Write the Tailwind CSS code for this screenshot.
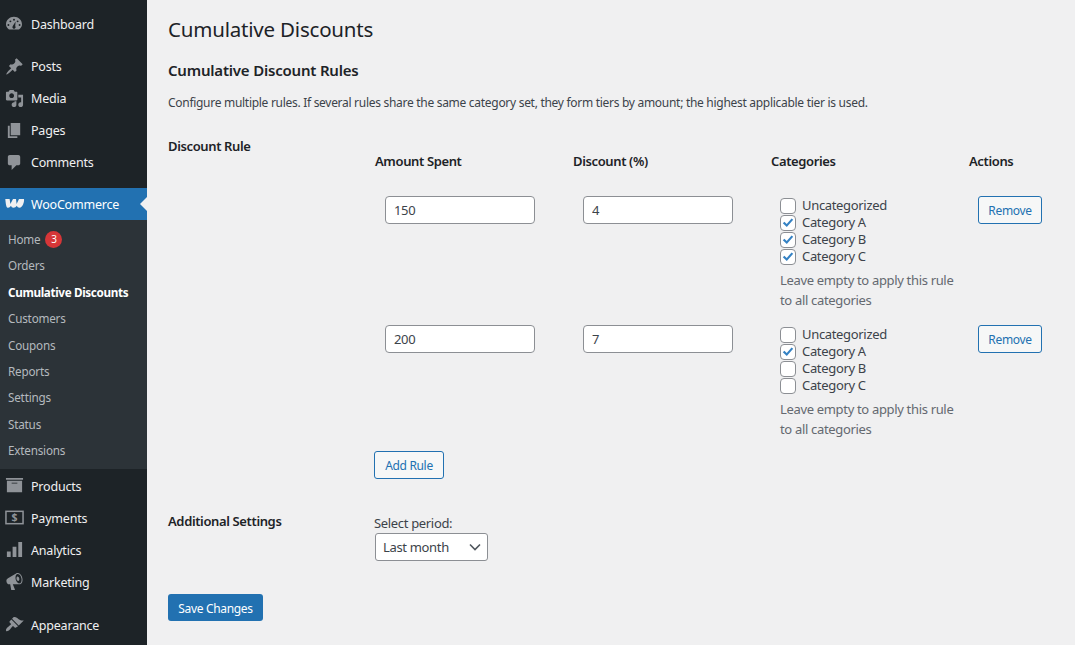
<!DOCTYPE html>
<html lang="en">
<head>
    <meta charset="UTF-8">
    <meta name="viewport" content="width=device-width, initial-scale=1.0">
    <title>Cumulative Discounts</title>
    <script src="https://cdn.jsdelivr.net/npm/@tailwindcss/browser@4"></script>
</head>
<body class="bg-[#f0f0f1] font-['Noto_Sans',sans-serif] text-[13px] text-[#3c434a] tracking-[-0.33px] overflow-hidden">
<div class="flex h-[645px] overflow-hidden">
    <!-- Sidebar -->
    <aside class="w-[147px] shrink-0 bg-[#1d2327] text-[#f0f0f1] text-[12.5px] tracking-[-0.2px] pt-2">
        <a class="flex items-center h-8 gap-[9px] pl-[6px]"><svg class="w-4 h-4 fill-[#8f9398]" viewBox="0 0 20 20"><path fill-rule="evenodd" d="M3.76 17h12.48C18.2 15.3 20 13 20 10.5 20 5 15.5 1 10 1S0 5 0 10.5C0 13 1.800 15.300 3.760 17zM10 3.500a1.200 1.200 0 110 2.400 1.200 1.200 0 010-2.400zM5.500 5.500a1.200 1.200 0 110 2.400 1.200 1.200 0 010-2.400zm9 0a1.200 1.200 0 110 2.400 1.200 1.200 0 010-2.400zM3 10a1.200 1.200 0 110 2.400A1.200 1.200 0 013 10zm14 0a1.200 1.200 0 110 2.400A1.200 1.200 0 0117 10zM12 7l-.5 5.500a2 2 0 11-3 0z"/></svg><span class="pt-[2px]">Dashboard</span></a>
        <div class="mt-[10px]">
            <a class="flex items-center h-8 gap-[7px] pl-[5px]"><svg class="w-[19px] h-[19px] fill-[#8f9398]" viewBox="0 0 20 20"><path d="M10.44 3.020l1.820-1.820 6.360 6.350-1.830 1.820c-1.050-.68-2.480-.57-3.410.36l-.75.75c-.92.93-1.040 2.350-.35 3.410l-1.830 1.820-2.410-2.410-2.800 2.790c-.42.42-3.380 2.710-3.800 2.290s1.860-3.390 2.280-3.810l2.790-2.790L4.100 9.360l1.830-1.820c1.050.69 2.480.57 3.400-.36l.75-.75c.93-.92 1.050-2.350.36-3.410z"/></svg><span class="pt-[2px]">Posts</span></a>
            <a class="flex items-center h-8 gap-[7px] pl-[5px]"><svg class="w-[19px] h-[19px] fill-[#8f9398]" viewBox="0 0 20 20"><path d="M13 11V4c0-.55-.45-1-1-1h-1.670L9 1H5L3.670 3H2c-.55 0-1 .45-1 1v7c0 .55.45 1 1 1h10c.55 0 1-.45 1-1zM7 4.500c1.380 0 2.500 1.120 2.500 2.500S8.380 9.500 7 9.500 4.500 8.380 4.500 7 5.620 4.500 7 4.500zM14 6h5v10.500c0 1.380-1.120 2.500-2.500 2.500S14 17.880 14 16.500s1.120-2.500 2.500-2.500c.17 0 .34.020.5.050V9h-3V6zm-4 8.050V13h2v3.500c0 1.380-1.120 2.500-2.500 2.500S7 17.880 7 16.500 8.120 14 9.500 14c.17 0 .34.020.5.050z"/></svg><span class="pt-[2px]">Media</span></a>
            <a class="flex items-center h-8 gap-[7px] pl-[5px]"><svg class="w-[19px] h-[19px] fill-[#8f9398]" viewBox="0 0 20 20"><path d="M6 15V2h10v13H6zm-1 1h8v2H3V5h2v11z"/></svg><span class="pt-[2px]">Pages</span></a>
            <a class="flex items-center h-8 gap-[7px] pl-[5px]"><svg class="w-[19px] h-[19px] fill-[#8f9398]" viewBox="0 0 20 20"><path d="M5 2h9c1.100 0 2 .9 2 2v7c0 1.100-.9 2-2 2h-2l-5 5v-5H5c-1.100 0-2-.9-2-2V4c0-1.100.9-2 2-2z"/></svg><span class="pt-[2px]">Comments</span></a>
        </div>
        <div class="mt-[10px]">
            <a class="relative flex items-center h-8 gap-[6px] pl-[5px] bg-[#2271b1] text-white"><svg class="w-5 h-5 fill-[#f0f0f1]" viewBox="0 0 20 20"><path d="M.3 5H4.600L5.400 10 8 5H11L11.600 10 14 5H19C19.500 8 17.500 13.800 14.600 13.800 13.200 13.800 12.300 13 11.800 11.800 11 13 9.800 13.800 8.600 13.800 7 13.800 6.400 13 6 11.800 5.200 13 4.200 13.800 3.200 13.800 1.600 13.800 1 12.500.3 5Z"/></svg><span class="pt-[2px]">WooCommerce</span><span class="absolute right-0 top-[9px] border-y-[7px] border-r-[7px] border-y-transparent border-r-[#f0f0f1]"></span></a>
            <div class="bg-[#2c3338] pt-[6.6px] pb-[4.8px] text-[11.7px] text-[#b4b9be]">
                <a class="flex items-center h-[26.4px] pl-2">Home<span class="ml-[5px] w-[17px] h-[17px] rounded-full bg-[#d63638] text-white text-[10px] flex items-center justify-center">3</span></a>
                <a class="flex items-center h-[26.4px] pl-2">Orders</a>
                <a class="flex items-center h-[26.4px] pl-2 font-bold text-white tracking-[-0.35px]">Cumulative Discounts</a>
                <a class="flex items-center h-[26.4px] pl-2">Customers</a>
                <a class="flex items-center h-[26.4px] pl-2">Coupons</a>
                <a class="flex items-center h-[26.4px] pl-2">Reports</a>
                <a class="flex items-center h-[26.4px] pl-2">Settings</a>
                <a class="flex items-center h-[26.4px] pl-2">Status</a>
                <a class="flex items-center h-[26.4px] pl-2">Extensions</a>
            </div>
        </div>
        <div class="mt-[1px]">
            <a class="flex items-center h-8 gap-[7px] pl-[5px]"><svg class="w-[19px] h-[19px] fill-[#8f9398]" viewBox="0 0 20 20"><path d="M19 2v2H1V2h18zM2 5h16v12H2V5zm11 3V7H7v1h6z"/></svg><span class="pt-[2px]">Products</span></a>
            <a class="flex items-center h-8 gap-[7px] pl-[5px]"><svg class="w-[19px] h-[19px]" viewBox="0 0 20 20"><rect x="1" y="3.500" width="18" height="13" fill="none" stroke="#8f9398" stroke-width="1.600"/><text x="10" y="14" text-anchor="middle" font-size="11" font-weight="700" fill="#8f9398">$</text></svg><span class="pt-[2px]">Payments</span></a>
            <a class="flex items-center h-8 gap-[7px] pl-[5px]"><svg class="w-[19px] h-[19px] fill-[#8f9398]" viewBox="0 0 20 20"><path d="M18 18V2h-4v16h4zm-6 0V7H8v11h4zm-6 0v-6H2v6h4z"/></svg><span class="pt-[2px]">Analytics</span></a>
            <a class="flex items-center h-8 gap-[7px] pl-[5px]"><svg class="w-[19px] h-[19px] fill-[#8f9398]" viewBox="0 0 20 20"><path d="M18.150 5.940c.46 1.620.38 3.220-.02 4.480-.42 1.280-1.260 2.180-2.300 2.480-.16.060-.26.060-.4.060-.06.020-.12.020-.18.020-.06.020-.14.020-.22.020h-6.800l2.220 5.500c.02.14-.06.26-.14.34-.08.1-.24.16-.34.16H6.950c-.1 0-.26-.06-.34-.16-.08-.08-.16-.2-.14-.34l-1-5.500H4.250l-.02-.02c-.5.060-1.080-.18-1.540-.62s-.88-1.080-1.060-1.880c-.24-.8-.2-1.560-.02-2.200.18-.62.58-1.080 1.060-1.300l.02-.02 9-5.400c.1-.06.18-.1.24-.16.06-.04.14-.08.24-.12.16-.08.28-.12.5-.18 1.040-.3 2.240.1 3.220.98s1.840 2.240 2.260 3.860zm-2.580 5.980h-.02c.4-.1.74-.34 1.040-.7.58-.7.86-1.760.86-3.040 0-.64-.1-1.300-.28-1.980-.34-1.360-1.020-2.500-1.780-3.240s-1.680-1.100-2.460-.88c-.82.22-1.400.96-1.700 2-.32 1.040-.28 2.360.06 3.720.38 1.360 1 2.500 1.800 3.240.78.74 1.620 1.100 2.480.88zm-2.540-7.080c.22-.04.42-.02.62.04.38.16.76.48 1.020 1s.42 1.200.42 1.780c0 .3-.04.56-.12.8-.18.48-.44.84-.86.94-.34.1-.8-.06-1.140-.4s-.64-.86-.78-1.500c-.18-.62-.12-1.240.02-1.720s.48-.84.82-.94z"/></svg><span class="pt-[2px]">Marketing</span></a>
            <a class="flex items-center h-8 gap-[7px] pl-[5px] mt-[11px]"><svg class="w-[19px] h-[19px] fill-[#8f9398]" viewBox="0 0 20 20"><path d="M14.480 11.060L7.410 3.990l1.500-1.500c.5-.56 2.300-.47 3.510.32 1.210.8 1.430 1.280 2.910 2.100 1.180.64 2.450 1.260 4.450.85zm-.71.71L6.700 4.700 4.930 6.470c-.39.39-.39 1.020 0 1.410l1.060 1.060c.39.39.39 1.030 0 1.420-.6.600-1.430 1.110-2.210 1.690-.35.26-.7.53-1.010.84-1.430 1.430-2.220 3.200-1.520 3.900s2.470-.09 3.900-1.520c.31-.31.580-.66.840-1.010.58-.78 1.090-1.610 1.690-2.210.39-.39 1.020-.39 1.410 0l1.060 1.060c.39.39 1.020.39 1.410 0z"/></svg><span class="pt-[2px]">Appearance</span></a>
        </div>
    </aside>

    <!-- Main content -->
    <main class="flex-1 pl-[21px] pr-[20px]">
        <h1 class="text-[20.5px] leading-[29px] font-normal text-[#1d2327] tracking-[-0.2px] mt-[15px]">Cumulative Discounts</h1>
        <h2 class="text-[15px] leading-5 font-semibold text-[#1d2327] tracking-[-0.2px] mt-[16px]">Cumulative Discount Rules</h2>
        <p class="text-[12px] leading-5 tracking-[-0.29px] mt-[13px]">Configure multiple rules. If several rules share the same category set, they form tiers by amount; the highest applicable tier is used.</p>

        <div class="flex mt-[21px]">
            <div class="w-[206px] shrink-0 font-semibold text-[#1d2327] tracking-[-0.37px] pt-[2px] leading-5">Discount Rule</div>
            <div>
                <div class="grid grid-cols-[198px_198px_198px_100px] font-semibold text-[#1d2327] tracking-[-0.37px] pt-[17px] leading-5 pl-[1px]">
                    <div>Amount Spent</div><div>Discount (%)</div><div>Categories</div><div>Actions</div>
                </div>

                <div class="grid grid-cols-[198px_198px_198px_100px] mt-[25px] pl-[1px]">
                    <div class="pl-[10px]"><input type="text" value="150" class="w-[150px] h-7 px-2 bg-white border border-[#8c8f94] rounded"></div>
                    <div class="pl-[10px]"><input type="text" value="4" class="w-[150px] h-7 px-2 bg-white border border-[#8c8f94] rounded"></div>
                    <div class="pl-[9px] pt-[1px]">
                        <label class="flex items-center h-[17px] gap-[6px]"><span class="relative w-4 h-4"><input type="checkbox" class="peer appearance-none block w-4 h-4 bg-white border border-[#8c8f94] rounded"><svg class="hidden peer-checked:block absolute inset-0 w-4 h-4 fill-[#3582c4]" viewBox="0 0 16 16"><path d="M2.800 8.200l1.600-1.500 2.300 2.300 4.900-5.600 1.600 1.400-6.400 7.300z"/></svg></span>Uncategorized</label>
                        <label class="flex items-center h-[17px] gap-[6px]"><span class="relative w-4 h-4"><input type="checkbox" checked class="peer appearance-none block w-4 h-4 bg-white border border-[#8c8f94] rounded"><svg class="hidden peer-checked:block absolute inset-0 w-4 h-4 fill-[#3582c4]" viewBox="0 0 16 16"><path d="M2.800 8.200l1.600-1.500 2.300 2.300 4.900-5.600 1.600 1.400-6.400 7.300z"/></svg></span>Category A</label>
                        <label class="flex items-center h-[17px] gap-[6px]"><span class="relative w-4 h-4"><input type="checkbox" checked class="peer appearance-none block w-4 h-4 bg-white border border-[#8c8f94] rounded"><svg class="hidden peer-checked:block absolute inset-0 w-4 h-4 fill-[#3582c4]" viewBox="0 0 16 16"><path d="M2.800 8.200l1.600-1.500 2.300 2.300 4.900-5.600 1.600 1.400-6.400 7.300z"/></svg></span>Category B</label>
                        <label class="flex items-center h-[17px] gap-[6px]"><span class="relative w-4 h-4"><input type="checkbox" checked class="peer appearance-none block w-4 h-4 bg-white border border-[#8c8f94] rounded"><svg class="hidden peer-checked:block absolute inset-0 w-4 h-4 fill-[#3582c4]" viewBox="0 0 16 16"><path d="M2.800 8.200l1.600-1.500 2.300 2.300 4.900-5.600 1.600 1.400-6.400 7.300z"/></svg></span>Category C</label>
                        <p class="text-[#646970] leading-5 mt-[5px] w-[178px]">Leave empty to apply this rule to all categories</p>
                    </div>
                    <div class="pl-[9px]"><button class="w-16 h-7 pt-[2px] bg-[#f6f7f7] border border-[#2271b1] rounded-[3px] text-[12px] text-[#2271b1]">Remove</button></div>
                </div>

                <div class="grid grid-cols-[198px_198px_198px_100px] mt-[15px] pl-[1px]">
                    <div class="pl-[10px]"><input type="text" value="200" class="w-[150px] h-7 px-2 bg-white border border-[#8c8f94] rounded"></div>
                    <div class="pl-[10px]"><input type="text" value="7" class="w-[150px] h-7 px-2 bg-white border border-[#8c8f94] rounded"></div>
                    <div class="pl-[9px] pt-[1px]">
                        <label class="flex items-center h-[17px] gap-[6px]"><span class="relative w-4 h-4"><input type="checkbox" class="peer appearance-none block w-4 h-4 bg-white border border-[#8c8f94] rounded"><svg class="hidden peer-checked:block absolute inset-0 w-4 h-4 fill-[#3582c4]" viewBox="0 0 16 16"><path d="M2.800 8.200l1.600-1.500 2.300 2.300 4.900-5.600 1.600 1.400-6.400 7.300z"/></svg></span>Uncategorized</label>
                        <label class="flex items-center h-[17px] gap-[6px]"><span class="relative w-4 h-4"><input type="checkbox" checked class="peer appearance-none block w-4 h-4 bg-white border border-[#8c8f94] rounded"><svg class="hidden peer-checked:block absolute inset-0 w-4 h-4 fill-[#3582c4]" viewBox="0 0 16 16"><path d="M2.800 8.200l1.600-1.500 2.300 2.300 4.900-5.600 1.600 1.400-6.400 7.300z"/></svg></span>Category A</label>
                        <label class="flex items-center h-[17px] gap-[6px]"><span class="relative w-4 h-4"><input type="checkbox" class="peer appearance-none block w-4 h-4 bg-white border border-[#8c8f94] rounded"><svg class="hidden peer-checked:block absolute inset-0 w-4 h-4 fill-[#3582c4]" viewBox="0 0 16 16"><path d="M2.800 8.200l1.600-1.500 2.300 2.300 4.900-5.600 1.600 1.400-6.400 7.300z"/></svg></span>Category B</label>
                        <label class="flex items-center h-[17px] gap-[6px]"><span class="relative w-4 h-4"><input type="checkbox" class="peer appearance-none block w-4 h-4 bg-white border border-[#8c8f94] rounded"><svg class="hidden peer-checked:block absolute inset-0 w-4 h-4 fill-[#3582c4]" viewBox="0 0 16 16"><path d="M2.800 8.200l1.600-1.500 2.300 2.300 4.900-5.600 1.600 1.400-6.400 7.300z"/></svg></span>Category C</label>
                        <p class="text-[#646970] leading-5 mt-[5px] w-[178px]">Leave empty to apply this rule to all categories</p>
                    </div>
                    <div class="pl-[9px]"><button class="w-16 h-7 pt-[2px] bg-[#f6f7f7] border border-[#2271b1] rounded-[3px] text-[12px] text-[#2271b1]">Remove</button></div>
                </div>

                <button class="block w-[70px] h-7 pt-[2px] mt-[12px] bg-[#f6f7f7] border border-[#2271b1] rounded-[3px] text-[12px] text-[#2271b1]">Add Rule</button>
            </div>
        </div>

        <div class="flex mt-[32px]">
            <div class="w-[206px] shrink-0 font-semibold text-[#1d2327] tracking-[-0.37px] leading-5">Additional Settings</div>
            <div class="pt-[2px]">
                <div class="leading-5">Select period:</div>
                <div class="relative w-[113px] ml-[1px]">
                    <select class="appearance-none block w-[113px] h-7 pl-[7px] pt-[2px] bg-white border border-[#8c8f94] rounded-[3px]"><option>Last month</option></select>
                    <svg class="absolute right-[6px] top-[7px] w-3.5 h-3.5 stroke-[#50575e] fill-none" viewBox="0 0 14 14" stroke-width="1.600"><path d="M2 4.500l5 5 5-5"/></svg>
                </div>
            </div>
        </div>

        <button class="block w-[95px] h-[27px] pt-[2px] mt-[33px] bg-[#2271b1] text-white text-[12px] rounded-[3px]">Save Changes</button>
    </main>
</div>
</body>
</html>
